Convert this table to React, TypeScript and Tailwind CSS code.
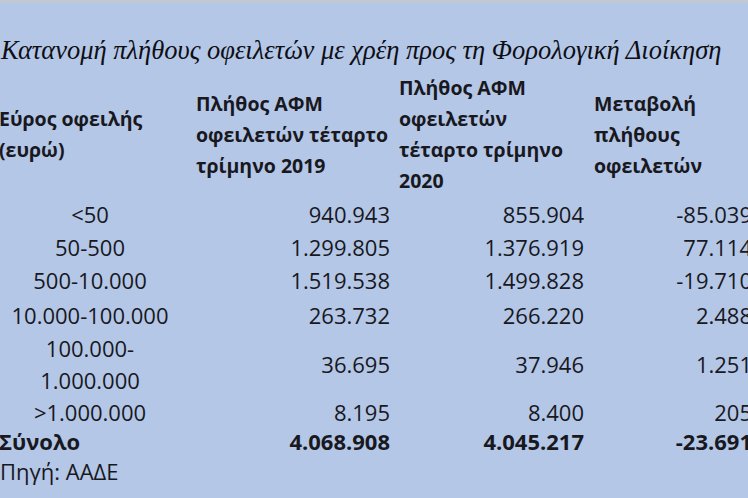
import React from "react";

const rows: { label: React.ReactNode; a: string; b: string; c: string; h: string }[] = [
  { label: "<50", a: "940.943", b: "855.904", c: "-85.039", h: "h-[35px]" },
  { label: "50-500", a: "1.299.805", b: "1.376.919", c: "77.114", h: "h-[32px]" },
  { label: "500-10.000", a: "1.519.538", b: "1.499.828", c: "-19.710", h: "h-[34px]" },
  { label: "10.000-100.000", a: "263.732", b: "266.220", c: "2.488", h: "h-[35px]" },
  {
    label: (
      <>
        100.000-
        <br />
        1.000.000
      </>
    ),
    a: "36.695",
    b: "37.946",
    c: "1.251",
    h: "h-[64px]",
  },
  { label: ">1.000.000", a: "8.195", b: "8.400", c: "205", h: "h-[28px]" },
];

const grid = "grid grid-cols-[188px_206px_196px_170px] items-center";

export default function App() {
  return (
    <div className="w-[748px] h-[498px] overflow-hidden bg-[#b4c7e7] text-[#18181e] font-['Open_Sans','Noto_Sans',sans-serif] text-[22px]">
      <div className="h-[4px] bg-gradient-to-b from-[#c8c9cc] to-[#b4c7e7]" />
      <div className="mt-[30px] h-[33px] leading-[33px] pl-[1px] whitespace-nowrap font-['Liberation_Serif',serif] italic text-[26.5px] text-[#0e0e14]">
        Κατανομή πλήθους οφειλετών με χρέη προς τη Φορολογική Διοίκηση
      </div>
      <div className="-ml-[4px] w-[760px] mt-[5px]">
        <div className={`${grid} h-[124px] leading-[31px] text-[19.5px] font-bold whitespace-nowrap`}>
          <div className="pl-[3px]">
            Εύρος οφειλής
            <br />
            (ευρώ)
          </div>
          <div className="pl-[12px]">
            Πλήθος ΑΦΜ
            <br />
            οφειλετών τέταρτο
            <br />
            τρίμηνο 2019
          </div>
          <div className="pl-[9px]">
            Πλήθος ΑΦΜ
            <br />
            οφειλετών
            <br />
            τέταρτο τρίμηνο
            <br />
            2020
          </div>
          <div className="pl-[8px]">
            Μεταβολή
            <br />
            πλήθους
            <br />
            οφειλετών
          </div>
        </div>
        {rows.map((r, i) => (
          <div key={i} className={`${grid} ${r.h} leading-[32px] font-medium whitespace-nowrap`}>
            <div className="text-center">{r.label}</div>
            <div className="text-right">{r.a}</div>
            <div className="text-right pr-[2px]">{r.b}</div>
            <div className="text-right pr-[4px]">{r.c}</div>
          </div>
        ))}
        <div className={`${grid} h-[33px] leading-[32px] font-bold whitespace-nowrap`}>
          <div className="pl-[3px]">Σύνολο</div>
          <div className="text-right">4.068.908</div>
          <div className="text-right pr-[2px]">4.045.217</div>
          <div className="text-right pr-[4px]">-23.691</div>
        </div>
      </div>
      <div className="h-[28px] leading-[28px] font-medium whitespace-nowrap">Πηγή: ΑΑΔΕ</div>
    </div>
  );
}
